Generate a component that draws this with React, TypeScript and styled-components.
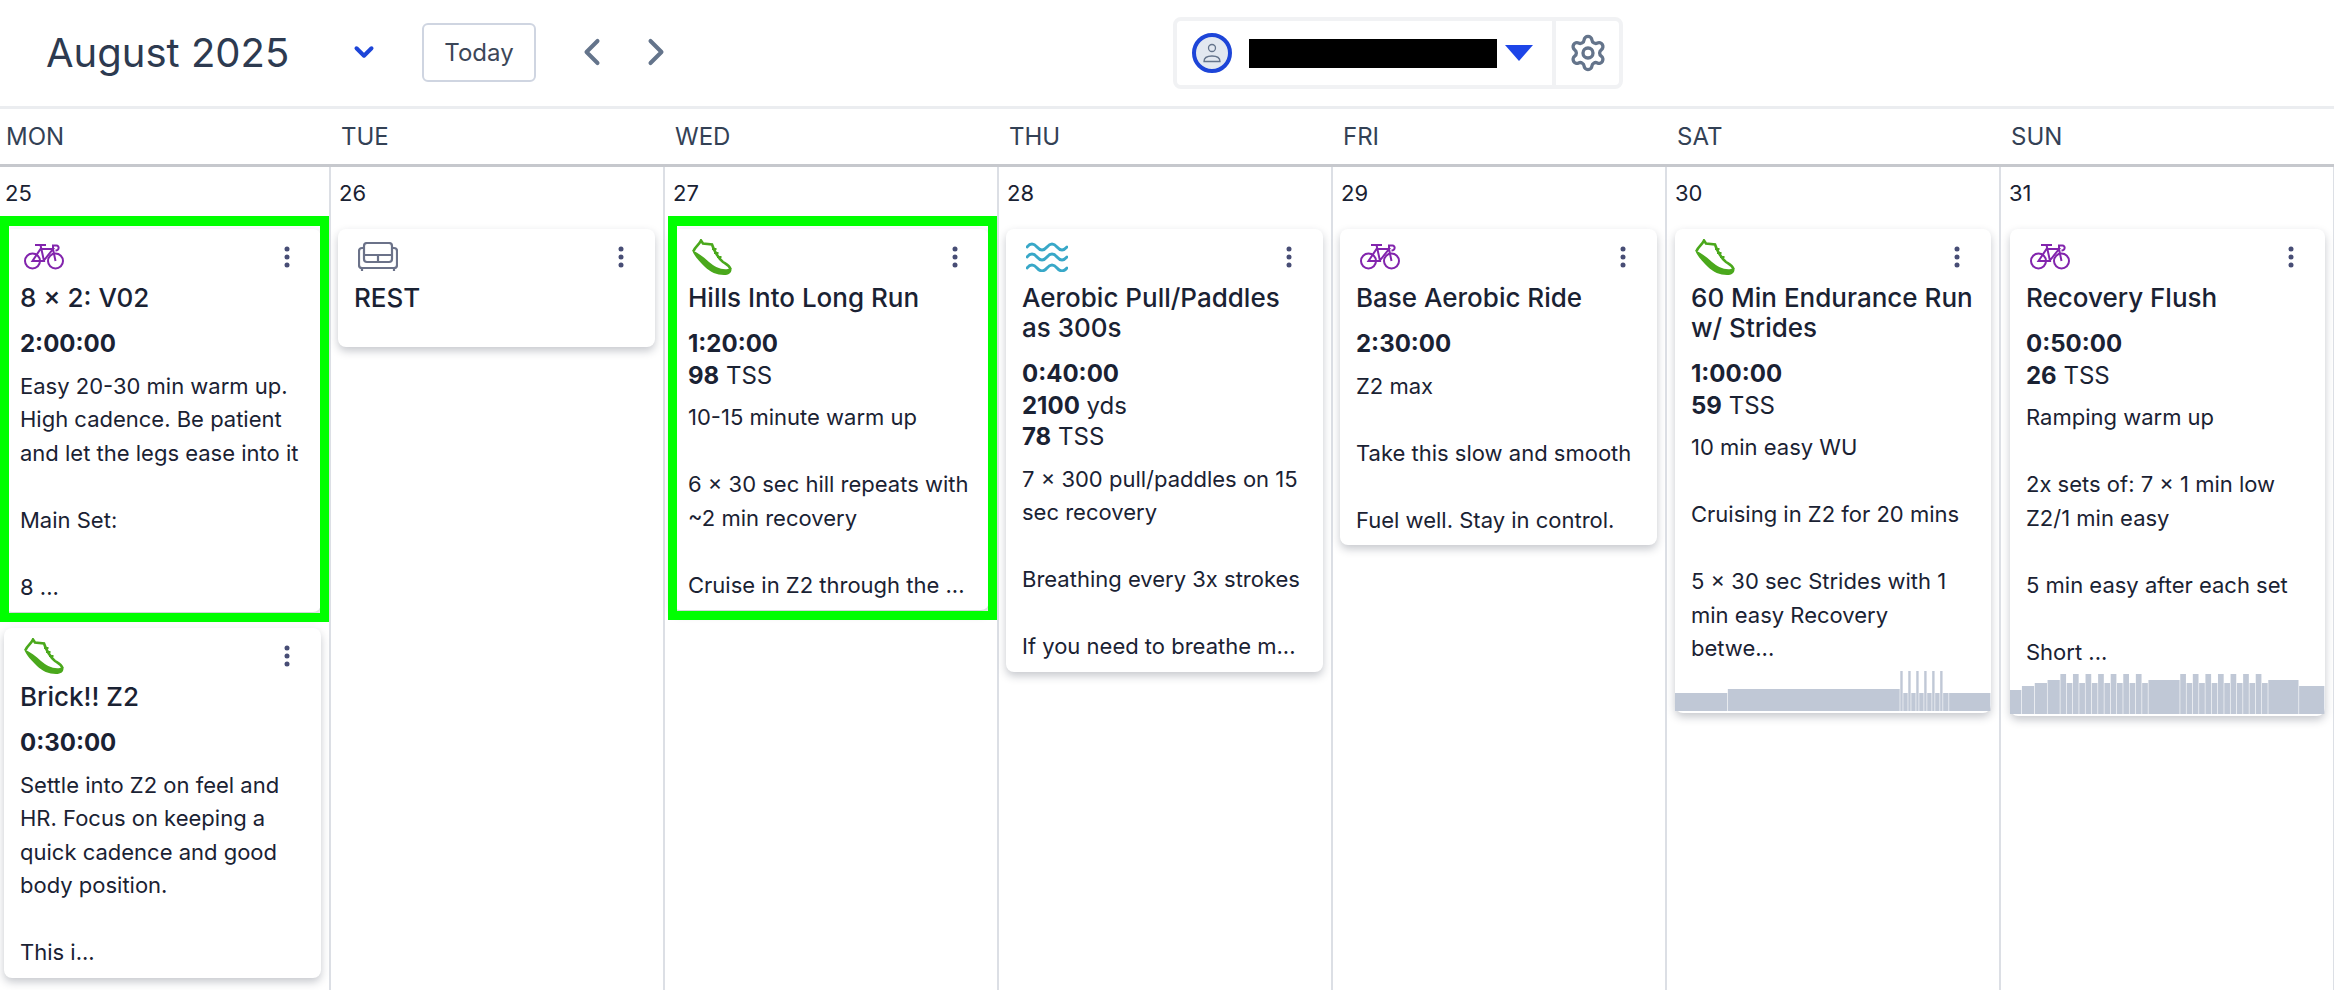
import React from "react";
import styled, { createGlobalStyle } from "styled-components";
import { ChevronDown, ChevronLeft, ChevronRight, Settings } from "lucide-react";

type Sport = "bike" | "run" | "swim" | "rest";

interface Workout {
  sport: Sport;
  title: string;
  stats?: { value: string; unit?: string }[];
  text?: string;
  picked?: boolean;
  profile?: number[][];
}

interface Day {
  name: string;
  date: number;
  inset: number;
  workouts: Workout[];
}

// [width, height] of each step of a workout profile
const satProfile = [
  [53, 18], [173, 22], [3, 40], [5, 18], [3, 40], [5, 18], [3, 40], [5, 18], [3, 40], [5, 18], [3, 40], [5, 18], [3, 40], [6, 18], [42, 18],
];

const intervals = () => {
  const out: number[][] = [];
  for (let i = 0; i < 7; i++) {
    out.push([6.33, 40], [6.33, 31]);
  }
  return out;
};
const sunProfile = [
  [12, 24], [12.9, 28], [12.9, 31], [12.9, 34],
  ...intervals(),
  [32, 34],
  ...intervals(),
  [31, 34], [26, 28],
];

const days: Day[] = [
  {
    name: "MON",
    date: 25,
    inset: 4,
    workouts: [
      {
        sport: "bike",
        title: "8 × 2: V02",
        stats: [{ value: "2:00:00" }],
        text: "Easy 20-30 min warm up. High cadence. Be patient and let the legs ease into it\n\nMain Set:\n\n8 ...",
        picked: true,
      },
      {
        sport: "run",
        title: "Brick!! Z2",
        stats: [{ value: "0:30:00" }],
        text: "Settle into Z2 on feel and HR. Focus on keeping a quick cadence and good body position.\n\nThis i...",
      },
    ],
  },
  { name: "TUE", date: 26, inset: 7, workouts: [{ sport: "rest", title: "REST" }] },
  {
    name: "WED",
    date: 27,
    inset: 7,
    workouts: [
      {
        sport: "run",
        title: "Hills Into Long Run",
        stats: [{ value: "1:20:00" }, { value: "98", unit: "TSS" }],
        text: "10-15 minute warm up\n\n6 × 30 sec hill repeats with ~2 min recovery\n\nCruise in Z2 through the ...",
        picked: true,
      },
    ],
  },
  {
    name: "THU",
    date: 28,
    inset: 7,
    workouts: [
      {
        sport: "swim",
        title: "Aerobic Pull/Paddles as 300s",
        stats: [{ value: "0:40:00" }, { value: "2100", unit: "yds" }, { value: "78", unit: "TSS" }],
        text: "7 × 300 pull/paddles on 15 sec recovery\n\nBreathing every 3x strokes\n\nIf you need to breathe m...",
      },
    ],
  },
  {
    name: "FRI",
    date: 29,
    inset: 7,
    workouts: [
      {
        sport: "bike",
        title: "Base Aerobic Ride",
        stats: [{ value: "2:30:00" }],
        text: "Z2 max\n\nTake this slow and smooth\n\nFuel well. Stay in control.",
      },
    ],
  },
  {
    name: "SAT",
    date: 30,
    inset: 8,
    workouts: [
      {
        sport: "run",
        title: "60 Min Endurance Run w/ Strides",
        stats: [{ value: "1:00:00" }, { value: "59", unit: "TSS" }],
        text: "10 min easy WU\n\nCruising in Z2 for 20 mins\n\n5 × 30 sec Strides with 1 min easy Recovery betwe...",
        profile: satProfile,
      },
    ],
  },
  {
    name: "SUN",
    date: 31,
    inset: 9,
    workouts: [
      {
        sport: "bike",
        title: "Recovery Flush",
        stats: [{ value: "0:50:00" }, { value: "26", unit: "TSS" }],
        text: "Ramping warm up\n\n2x sets of: 7 × 1 min low Z2/1 min easy\n\n5 min easy after each set\n\nShort ...",
        profile: sunProfile,
      },
    ],
  },
];

const GlobalStyle = createGlobalStyle`
  html, body {
    margin: 0;
    background: #fff;
    font-family: Inter, "Liberation Sans", sans-serif;
    overflow: hidden;
  }
`;

const Page = styled.div`
  width: 2334px;
  height: 990px;
  overflow: hidden;
  background: #fff;
`;

const Toolbar = styled.header`
  height: 106px;
  display: flex;
  align-items: center;
  border-bottom: 3px solid #ebedf0;
`;

const ToolbarLeft = styled.div`
  width: 1173px;
  padding: 0 0 2px 46px;
  box-sizing: border-box;
  display: flex;
  align-items: center;
`;

const MonthTitle = styled.h1`
  margin: 0;
  width: 294px;
  font-size: 40px;
  font-weight: 400;
  color: #2d3a50;
`;

const MonthCaret = styled(ChevronDown)`
  margin-left: 9px;
  color: #1d45d8;
`;

const TodayButton = styled.button`
  margin-left: 43px;
  width: 114px;
  height: 59px;
  border: 2px solid #cfd5e1;
  border-radius: 6px;
  background: #fff;
  font: 400 24px Inter, sans-serif;
  color: #3c4759;
`;

const ArrowGroup = styled.div`
  margin-left: 34px;
  display: flex;
  gap: 20px;
  color: #64748b;
`;

const AthletePanel = styled.div`
  width: 450px;
  height: 72px;
  box-sizing: border-box;
  border: 4px solid #f1f2f4;
  border-radius: 8px;
  display: flex;
  align-items: center;
`;

const Avatar = styled.div`
  margin-left: 15px;
  width: 40px;
  height: 40px;
  box-sizing: border-box;
  border: 4px solid #1d45d8;
  border-radius: 50%;
  background: #e2e8f0;
  display: flex;
  align-items: center;
  justify-content: center;
`;

const Redaction = styled.div`
  margin-left: 17px;
  width: 248px;
  height: 29px;
  background: #000;
`;

const Caret = styled.div`
  margin-left: 8px;
  border-left: 14px solid transparent;
  border-right: 14px solid transparent;
  border-top: 16px solid #1d45e8;
`;

const GearBox = styled.div`
  margin-left: auto;
  width: 63px;
  height: 100%;
  border-left: 4px solid #f1f2f4;
  display: flex;
  align-items: center;
  justify-content: center;
  color: #64748b;
`;

const WeekGrid = styled.div`
  display: grid;
  grid-template-columns: 331px repeat(6, 334px);
`;

const WeekHead = styled(WeekGrid)`
  height: 55px;
  border-bottom: 3px solid #c6c8cd;
`;

const WeekName = styled.div<{ $first: boolean }>`
  padding-left: ${({ $first }) => ($first ? "6px" : "10px")};
  font-size: 24px;
  line-height: 55px;
  color: #334155;
`;

const DayColumn = styled.section<{ $inset: number }>`
  height: 825px;
  box-sizing: border-box;
  padding: 0 8px 0 ${({ $inset }) => $inset}px;
  border-right: 2px solid #dcdfe5;
  display: flex;
  flex-direction: column;
  gap: 16px;
`;

const DateLabel = styled.div<{ $inset: number }>`
  height: 46px;
  margin-left: ${({ $inset }) => ($inset > 7 ? 7 - $inset : 0)}px;
  padding-left: 1px;
  font-size: 22px;
  line-height: 53px;
  color: #1a2233;
  flex: none;
`;

const Card = styled.article<{ $picked?: boolean }>`
  position: relative;
  background: #fff;
  border-radius: 8px;
  box-shadow: 0 4px 8px rgba(30, 41, 59, 0.25);
  padding-top: 8px;
  ${({ $picked }) =>
    $picked &&
    `&::after {
      content: "";
      position: absolute;
      inset: -13px -8px -10px -4px;
      border: 9px solid #00ff00;
      border-top-width: 10px;
      pointer-events: none;
    }`}
`;

const CardTop = styled.div`
  height: 39px;
  padding: 0 30px 7px 20px;
  display: flex;
  align-items: center;
  justify-content: space-between;
`;

const CardTitle = styled.h3<{ $rest?: boolean }>`
  margin: 0 16px ${({ $rest }) => ($rest ? "34px" : "15px")};
  font-size: 26px;
  line-height: 30px;
  font-weight: 500;
  color: #1a2233;
`;

const Stats = styled.div`
  margin: 0 16px 10px;
  font-size: 24px;
  line-height: 31.5px;
  color: #1a2233;
`;

const StatValue = styled.b`
  font-weight: 700;
`;

const Description = styled.p`
  margin: 0 16px;
  padding-bottom: 8px;
  font-size: 22px;
  line-height: 33.5px;
  color: #1a2233;
  white-space: pre-line;
`;

const ProfileSvg = styled.svg`
  display: block;
  margin: -3px 0 2px;
  fill: #c0c8d6;
`;

const Dots = styled.svg`
  fill: #474d75;
  flex: none;
`;

const BikeIcon = () => (
  <svg width="40" height="26" viewBox="0 0 40 26" fill="none" stroke="#8224ad" strokeWidth="2">
    <circle cx="8.5" cy="17" r="7.5" />
    <circle cx="31.5" cy="17" r="7.5" />
    <path d="M11 1h11M16.500 1l3.500 16H8.500l8-12h12.500L19.500 17M29 5l2.500 12M29 5V1.500h3.500c3 0 3 5-1 5" />
  </svg>
);

const ShoeIcon = () => (
  <svg width="40" height="36" viewBox="0 0 40 36" fill="none" stroke="#4aa81c">
    <path
      fill="#4aa81c"
      stroke="none"
      d="M0 11C2 17 8 23 13 28 18 33 25 36 32 36 37 36 40 34 39.500 29L36 30C29 31 23 28 17 23 12 18 6 14 0 11z"
    />
    <path strokeWidth="2.600" d="M1.500 12C3 8 7 6 9 1.500L11 4.500 20 5.500C22 12 27 20 31 23 34 25 37 26 38.500 30" />
    <path strokeWidth="2" d="M20 10h4.500M22 14h4.500M25 18h4.500" />
  </svg>
);

const SofaIcon = () => (
  <svg width="40" height="30" viewBox="0 0 40 30" fill="none" stroke="#6b7289" strokeWidth="2.200">
    <rect x="6" y="1" width="28" height="19" rx="3" />
    <path d="M6 13h28M20 13v7M6 6H4a3 3 0 0 0-3 3v14a3 3 0 0 0 3 3h32a3 3 0 0 0 3-3V9a3 3 0 0 0-3-3h-2M4 26v3M36 26v3" />
  </svg>
);

const WaveIcon = () => (
  <svg width="42" height="30" viewBox="0 0 42 30" fill="none" stroke="#38a8c8" strokeWidth="2.800" strokeLinecap="round">
    <path d="M1 5c3.300-4 6.700-4 10 0s6.700 4 10 0 6.700-4 10 0 6.700 4 10 0" />
    <path d="M1 15c3.300-4 6.700-4 10 0s6.700 4 10 0 6.700-4 10 0 6.700 4 10 0" />
    <path d="M1 26c3.300-4 6.700-4 10 0s6.700 4 10 0 6.700-4 10 0 6.700 4 10 0" />
  </svg>
);

const SportIcon = ({ sport }: { sport: Sport }) => {
  if (sport === "bike") return <BikeIcon />;
  if (sport === "run") return <ShoeIcon />;
  if (sport === "rest") return <SofaIcon />;
  return <WaveIcon />;
};

const MoreDots = () => (
  <Dots width="8" height="24" viewBox="0 0 8 24">
    <circle cx="4" cy="4" r="2.500" />
    <circle cx="4" cy="12" r="2.500" />
    <circle cx="4" cy="20" r="2.500" />
  </Dots>
);

const Profile = ({ steps }: { steps: number[][] }) => {
  let x = 0;
  return (
    <ProfileSvg width="100%" height="40" viewBox="0 0 317 40" preserveAspectRatio="none">
      {steps.map(([w, h], i) => {
        const bar = <rect key={i} x={x} y={40 - h} width={w - 0.6} height={h} />;
        x += w;
        return bar;
      })}
    </ProfileSvg>
  );
};

const WorkoutCard = ({ workout }: { workout: Workout }) => (
  <Card $picked={workout.picked}>
    <CardTop>
      <SportIcon sport={workout.sport} />
      <MoreDots />
    </CardTop>
    <CardTitle $rest={!workout.stats}>{workout.title}</CardTitle>
    {workout.stats && (
      <Stats>
        {workout.stats.map((s) => (
          <div key={s.value}>
            <StatValue>{s.value}</StatValue>
            {s.unit && ` ${s.unit}`}
          </div>
        ))}
      </Stats>
    )}
    {workout.text && <Description>{workout.text}</Description>}
    {workout.profile && <Profile steps={workout.profile} />}
  </Card>
);

export default function App() {
  return (
    <Page>
      <GlobalStyle />
      <Toolbar>
        <ToolbarLeft>
          <MonthTitle>August 2025</MonthTitle>
          <MonthCaret size={30} strokeWidth={3.200} />
          <TodayButton>Today</TodayButton>
          <ArrowGroup>
            <ChevronLeft size={44} strokeWidth={2.200} />
            <ChevronRight size={44} strokeWidth={2.200} />
          </ArrowGroup>
        </ToolbarLeft>
        <AthletePanel>
          <Avatar>
            <svg width="24" height="24" viewBox="0 0 24 24" fill="none" stroke="#64748b" strokeWidth="1.300">
              <circle cx="12" cy="7" r="3.500" />
              <path d="M4 20.500c0-3.500 3-5.500 8-5.500s8 2 8 5.500z" />
            </svg>
          </Avatar>
          <Redaction />
          <Caret />
          <GearBox>
            <Settings size={40} strokeWidth={2} />
          </GearBox>
        </AthletePanel>
      </Toolbar>
      <WeekHead>
        {days.map((d, i) => (
          <WeekName key={d.name} $first={i === 0}>
            {d.name}
          </WeekName>
        ))}
      </WeekHead>
      <WeekGrid>
        {days.map((d) => (
          <DayColumn key={d.name} $inset={d.inset}>
            <DateLabel $inset={d.inset}>{d.date}</DateLabel>
            {d.workouts.map((w) => (
              <WorkoutCard key={w.title} workout={w} />
            ))}
          </DayColumn>
        ))}
      </WeekGrid>
    </Page>
  );
}
